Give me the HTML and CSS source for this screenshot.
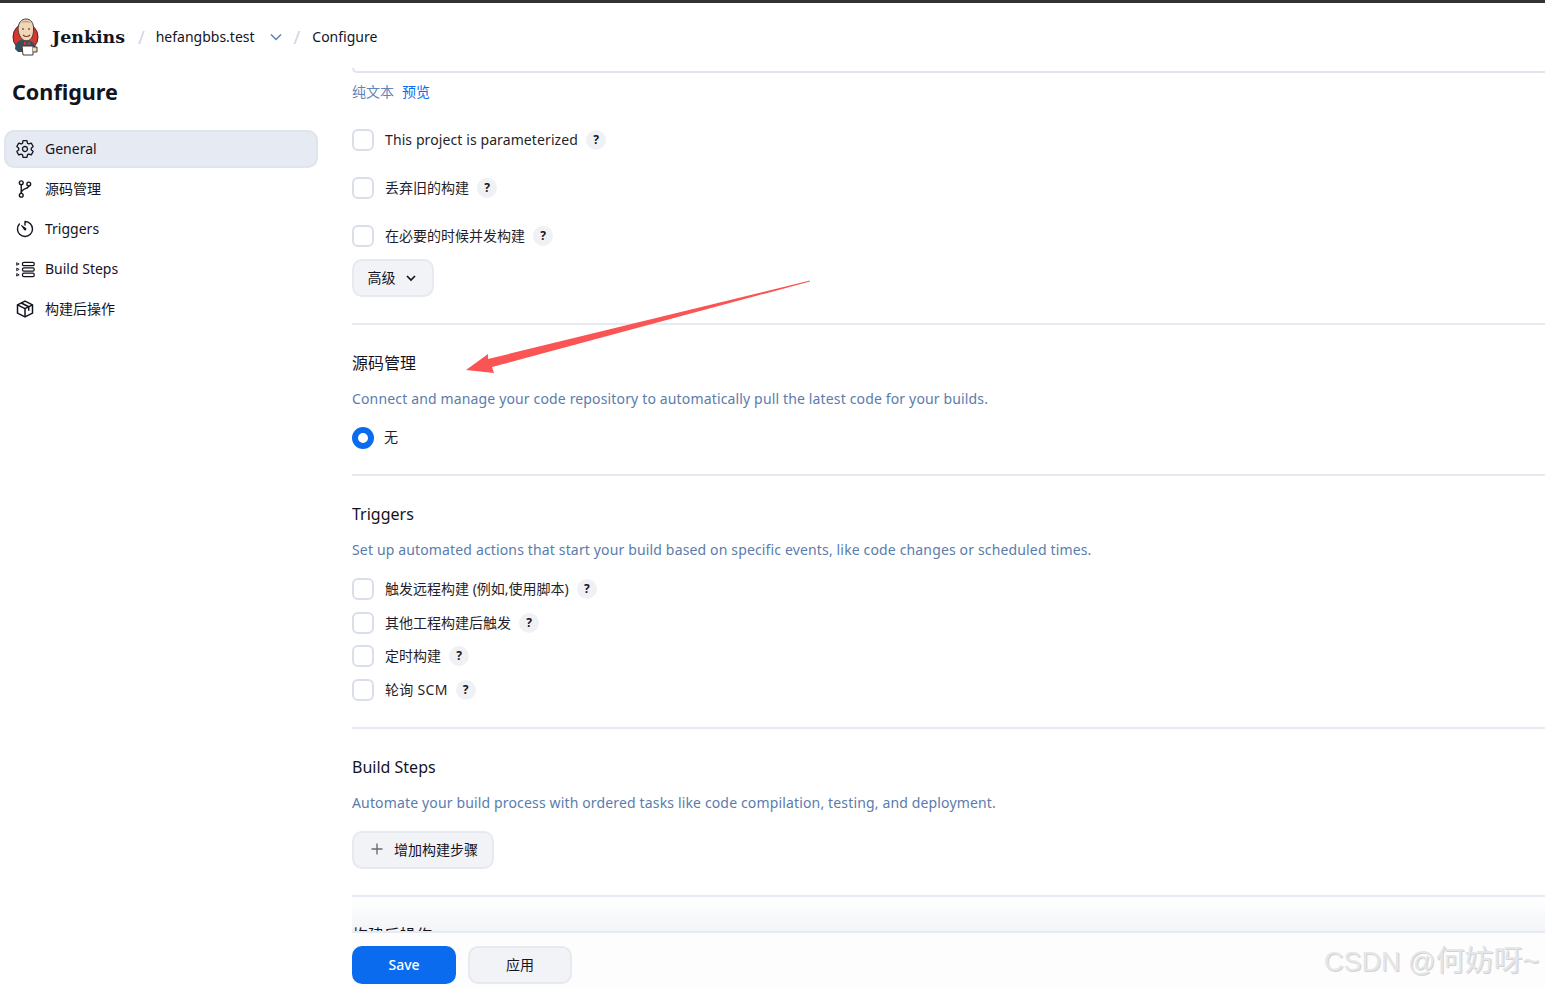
FILE: index.html
```html
<!DOCTYPE html>
<html lang="en">
<head>
    <meta charset="UTF-8" />
    <meta name="viewport" content="width=device-width, initial-scale=1.0" />
    <title>Configure - Jenkins</title>
    <link rel="stylesheet" href="styles.css">
</head>
<body>
    <header class="topbar">
        <svg class="logo" viewBox="0 0 28 38" width="28" height="38">
            <ellipse cx="13.5" cy="19" rx="12.5" ry="13.5" fill="#d33833" stroke="#5b1d1b" stroke-width="1" />
            <path d="M6 12 C6 4 10 1 14 1 C19 1 22 5 21.5 12 C21.5 17 20 22 15 23 C10 23 7 18 6 12 Z" fill="#f0d6b7" stroke="#49382f" stroke-width="1" />
            <path d="M9 5 C11 2 17 2 19 5 C16 4 12 4 9 5 Z" fill="#b9a08a" />
            <path d="M10 11h2M16 11h2" stroke="#3b2b22" stroke-width="1" />
            <path d="M11 17 C13 19 16 19 18 17" stroke="#7a3b30" stroke-width="1.2" fill="none" />
            <path d="M3 31 C3 25 7 22 10 22 L19 23 C22 25 24 28 24 31 L22 34 H6 Z" fill="#335061" />
            <path d="M12 23 L15 26 L18 23 L18 27 L15 26 L12 27 Z" fill="#d33833" />
            <path d="M10 28 H21 V37 H11 Z" fill="#fff" stroke="#49382f" stroke-width="1" />
            <path d="M21 29 h4 v5 h-4" fill="#f0d6b7" stroke="#49382f" stroke-width="1" />
        </svg>
        <span class="brand">Jenkins</span>
        <span class="crumb-sep">/</span>
        <span class="crumb">hefangbbs.test</span>
        <svg class="crumb-chevron" viewBox="0 0 12 8" width="12" height="8"><path d="M1 1.5 L6 6.5 L11 1.5" fill="none" stroke="#5c7fa8" stroke-width="1.4" /></svg>
        <span class="crumb-sep second">/</span>
        <span class="crumb">Configure</span>
    </header>

    <div class="layout">
        <aside class="sidebar">
            <h1 class="page-title">Configure</h1>
            <nav class="side-nav">
                <a class="side-item active">
                    <svg class="side-icon" viewBox="0 0 512 512"><path fill="none" stroke="currentColor" stroke-width="34" stroke-linecap="round" stroke-linejoin="round" d="M262.29 192.31a64 64 0 1057.4 57.4 64.13 64.13 0 00-57.4-57.4zM416.39 256a154.34 154.34 0 01-1.53 20.79l45.21 35.46a10.81 10.81 0 012.45 13.75l-42.77 74a10.81 10.81 0 01-13.14 4.59l-44.9-18.08a16.11 16.11 0 00-15.17 1.75A164.48 164.48 0 01325 400.8a15.94 15.94 0 00-8.82 12.14l-6.73 47.89a11.08 11.08 0 01-10.68 9.17h-85.54a11.11 11.11 0 01-10.69-8.87l-6.72-47.82a16.07 16.07 0 00-9-12.22 155.3 155.3 0 01-21.46-12.57 16 16 0 00-15.11-1.71l-44.89 18.07a10.81 10.81 0 01-13.14-4.58l-42.77-74a10.8 10.8 0 012.45-13.75l38.21-30a16.05 16.05 0 006-14.08c-.36-4.17-.58-8.33-.58-12.5s.21-8.27.58-12.35a16 16 0 00-6.07-13.94l-38.19-30A10.81 10.81 0 0149.48 186l42.77-74a10.81 10.81 0 0113.14-4.59l44.9 18.08a16.11 16.11 0 0015.17-1.75A164.48 164.48 0 01187 111.2a15.94 15.94 0 008.82-12.14l6.73-47.89A11.08 11.08 0 01213.23 42h85.54a11.11 11.11 0 0110.69 8.87l6.72 47.82a16.07 16.07 0 009 12.22 155.3 155.3 0 0121.46 12.57 16 16 0 0015.11 1.71l44.89-18.07a10.81 10.81 0 0113.14 4.58l42.77 74a10.8 10.8 0 01-2.45 13.75l-38.21 30a16.05 16.05 0 00-6.05 14.08c.33 4.14.55 8.3.55 12.47z"/></svg>
                    General
                </a>
                <a class="side-item">
                    <svg class="side-icon" viewBox="0 0 512 512"><g fill="none" stroke="currentColor" stroke-width="36" stroke-linecap="round" stroke-linejoin="round"><circle cx="160" cy="96" r="48"/><circle cx="160" cy="416" r="48"/><circle cx="352" cy="128" r="48"/><path d="M160 144v224"/><path d="M352 176c0 80-192 64-192 176"/></g></svg>
                    源码管理
                </a>
                <a class="side-item">
                    <svg class="side-icon" viewBox="0 0 512 512"><g fill="none" stroke="currentColor" stroke-width="36" stroke-linecap="round" stroke-linejoin="round"><path d="M112.91 128A191.85 191.85 0 0064 254c-1.18 106.35 85.65 193.8 192 194 106.2.2 192-85.83 192-192 0-104.54-83.55-189.61-187.5-192a4.36 4.36 0 00-4.5 4.37V152"/></g><path fill="currentColor" d="M233.38 278.63l-79-113a8.13 8.13 0 0111.32-11.32l113 79a32.5 32.5 0 01-37.25 53.26 33.21 33.21 0 01-8.07-8.94z"/></svg>
                    Triggers
                </a>
                <a class="side-item">
                    <svg class="side-icon" viewBox="0 0 24 24"><g fill="none" stroke="currentColor" stroke-width="1.5"><rect x="9" y="4" width="14" height="4" rx="1.5"/><rect x="9" y="10.5" width="14" height="4" rx="1.5"/><rect x="9" y="17" width="14" height="4" rx="1.5"/></g><g fill="none" stroke="currentColor" stroke-width="1.1"><path d="M2 4.5 L5 6 L2 7.5 Z"/><path d="M2 11 L5 12.5 L2 14 Z"/><path d="M2 17.5 L5 19 L2 20.5 Z"/></g></svg>
                    Build Steps
                </a>
                <a class="side-item">
                    <svg class="side-icon" viewBox="0 0 24 24"><g fill="none" stroke="currentColor" stroke-width="1.8" stroke-linejoin="round"><path d="M12 2.5 L21 7 V17 L12 21.5 L3 17 V7 Z"/><path d="M3 7 L12 11.5 L21 7"/><path d="M12 11.5 V21.5"/><path d="M7.5 4.8 L16.5 9.3 V14"/></g></svg>
                    构建后操作
                </a>
            </nav>
        </aside>

        <main class="content">
            <div class="editor-end"></div>
            <div class="editor-links"><a class="link-muted">纯文本</a><a class="link-blue">预览</a></div>

            <div class="opt-group wide">
                <label class="opt"><span class="check"></span><span class="latin">This project is parameterized</span><span class="help">?</span></label>
                <label class="opt"><span class="check"></span><span>丢弃旧的构建</span><span class="help">?</span></label>
                <label class="opt"><span class="check"></span><span>在必要的时候并发构建</span><span class="help">?</span></label>
            </div>
            <button class="btn advanced">高级
                <svg viewBox="0 0 12 8" width="12" height="8"><path d="M2 2 L6 6 L10 2" fill="none" stroke="#14141f" stroke-width="1.7" /></svg>
            </button>

            <section class="section">
                <h2>源码管理</h2>
                <p class="desc">Connect and manage your code repository to automatically pull the latest code for your builds.</p>
                <label class="opt radio-row"><span class="radio"></span><span class="radio-label">无</span></label>
            </section>

            <section class="section">
                <h2>Triggers</h2>
                <p class="desc">Set up automated actions that start your build based on specific events, like code changes or scheduled times.</p>
                <div class="opt-group tight">
                    <label class="opt"><span class="check"></span><span>触发远程构建 (例如,使用脚本)</span><span class="help">?</span></label>
                    <label class="opt"><span class="check"></span><span>其他工程构建后触发</span><span class="help">?</span></label>
                    <label class="opt"><span class="check"></span><span>定时构建</span><span class="help">?</span></label>
                    <label class="opt"><span class="check"></span><span class="scm">轮询 SCM</span><span class="help">?</span></label>
                </div>
            </section>

            <section class="section">
                <h2>Build Steps</h2>
                <p class="desc">Automate your build process with ordered tasks like code compilation, testing, and deployment.</p>
                <button class="btn add-step">
                    <svg viewBox="0 0 12 12" width="12" height="12"><path d="M6 0.5 V11.5 M0.5 6 H11.5" fill="none" stroke="#6b6b76" stroke-width="1.4" /></svg>
                    增加构建步骤
                </button>
            </section>

            <div class="form-fade"></div>

            <section class="section last">
                <h2>构建后操作</h2>
            </section>

            <div class="bottom-bar">
                <button class="btn primary">Save</button>
                <button class="btn apply">应用</button>
            </div>
        </main>
    </div>

    <!-- annotation drawn on top of the screenshot -->
    <svg class="arrow" viewBox="0 0 1545 988" width="1545" height="988">
        <polygon points="810,280.5 810,281.5 492,367 494,373 466,370 488,354 488,359" fill="#fb5454" />
    </svg>
    <div class="watermark"><span class="wm-latin">CSDN @</span>何妨呀~</div>
</body>
</html>
```

FILE: styles.css
```css
* {
    box-sizing: border-box;
}

html, body {
    height: 988px;
    overflow: hidden;
}

body {
    margin: 0;
    background: #fff;
    color: #14141f;
    font-family: "Noto Sans", "Noto Sans CJK SC", sans-serif;
    font-size: 14px;
    line-height: 20px;
    position: relative;
}

/* Header */
.topbar {
    height: 68px;
    border-top: 3px solid #333;
    display: flex;
    align-items: center;
    padding: 2px 0 0 12px;
}

.logo {
    margin-right: 12px;
    margin-top: 1px;
}

.brand {
    font-family: "DejaVu Serif", Georgia, serif;
    font-weight: 700;
    font-size: 17.4px;
    width: 73px;
}

.crumb-sep {
    color: #ccd5e3;
    font-size: 18px;
    margin: 0 11px 0 13px;
}

.crumb-sep.second {
    margin: 0 12px 0 12px;
}

.crumb {
    font-size: 14px;
}

.crumb-chevron {
    margin-left: 15px;
}

/* Sidebar */
.layout {
    display: flex;
}

.sidebar {
    width: 352px;
    flex-shrink: 0;
    padding-left: 4px;
}

.page-title {
    margin: 8px 0 22px 8px;
    font-size: 21.6px;
    line-height: 32px;
    font-weight: 700;
}

.side-nav {
    display: flex;
    flex-direction: column;
    gap: 2px;
    width: 314px;
}

.side-item {
    display: flex;
    align-items: center;
    gap: 10px;
    height: 38px;
    padding-left: 9px;
    border: 2px solid transparent;
    border-radius: 10px;
}

.side-item.active {
    background: #e6eaf2;
    border-color: #dfe4ed;
}

.side-icon {
    width: 20px;
    height: 20px;
    flex-shrink: 0;
}

/* Main column */
.content {
    flex: 1;
    height: 920px;
    position: relative;
    overflow: hidden;
}

.editor-end {
    height: 5px;
    border-left: 2px solid #dfe4ed;
    border-bottom: 2px solid #dfe4ed;
    border-bottom-left-radius: 10px;
}

.editor-links {
    margin-top: 9px;
    display: flex;
    gap: 8px;
}

.link-muted {
    color: #5f86b8;
}

.link-blue {
    color: #0b6bef;
}

.opt-group {
    display: flex;
    flex-direction: column;
}

.opt-group.wide {
    margin-top: 27px;
    gap: 26px;
}

.opt-group.tight {
    margin-top: 18px;
    gap: 11.67px;
}

.opt {
    display: flex;
    align-items: center;
    height: 22px;
    color: #1f1f2b;
}

.opt .latin {
    letter-spacing: 0.1px;
}

.opt .scm {
    letter-spacing: 0.3px;
}

.check {
    width: 22px;
    height: 22px;
    border: 2px solid #d9deea;
    border-radius: 6px;
    margin-right: 11px;
    background: #fff;
}

.help {
    width: 20px;
    height: 20px;
    border-radius: 50%;
    margin-left: 8px;
    background: #eff1f5;
    color: #14141f;
    font-size: 12px;
    font-weight: 700;
    display: flex;
    align-items: center;
    justify-content: center;
}

.radio-row {
    margin-top: 18px;
    margin-bottom: -1px;
}

.radio {
    width: 22px;
    height: 22px;
    border-radius: 50%;
    border: 6px solid #0b6bef;
    background: #fff;
    margin-right: 10px;
}

.radio-label {
    padding-bottom: 2px;
}

.btn {
    font-family: inherit;
    font-size: 14px;
    height: 38px;
    border-radius: 10px;
    border: 2px solid #e6eaf0;
    background: #f1f3f7;
    color: #14141f;
    display: flex;
    align-items: center;
    justify-content: center;
    padding: 0 0 2px;
}

.advanced {
    width: 82px;
    gap: 9px;
    margin-top: 12px;
    padding-right: 2px;
}

.advanced svg {
    margin-top: 2px;
}

.add-step {
    width: 142px;
    gap: 11px;
    margin-top: 18px;
    padding-left: 3px;
}

/* Sections */
.section {
    border-top: 2px solid #e6eaf2;
    margin-top: 26px;
    padding-top: 27px;
}

.section h2 {
    margin: 0;
    font-size: 16px;
    line-height: 22px;
    font-weight: 400;
}

.section.last h2 {
    position: relative;
}

.desc {
    margin: 15px 0 0;
    color: #5a7cac;
    font-size: 14px;
    line-height: 20px;
    letter-spacing: 0.15px;
}

/* Save bar over the bottom of the form */
.form-fade {
    position: absolute;
    left: 0;
    right: 0;
    bottom: 57px;
    height: 34px;
    background: linear-gradient(rgba(240, 242, 246, 0), rgba(240, 242, 246, 0.8));
}

.bottom-bar {
    position: absolute;
    left: 0;
    right: 0;
    bottom: 0;
    height: 57px;
    border-top: 2px solid #e6eaf2;
    background: #fdfdfe;
    display: flex;
    gap: 12px;
    padding-top: 13px;
}

.primary {
    width: 104px;
    background: #0b6bef;
    border-color: #0b6bef;
    color: #fff;
    font-weight: 500;
}

.apply {
    width: 104px;
}

.arrow {
    position: absolute;
    left: 0;
    top: 0;
    pointer-events: none;
}

.watermark {
    position: absolute;
    left: 1324px;
    top: 940px;
    font-family: "Liberation Sans", "Noto Sans CJK SC", sans-serif;
    font-size: 29px;
    line-height: 42px;
    white-space: nowrap;
    color: #e6e6e6;
    text-shadow: 1px 1px 0 #d2d2d2;
}

.wm-latin {
    font-size: 27px;
}
```
